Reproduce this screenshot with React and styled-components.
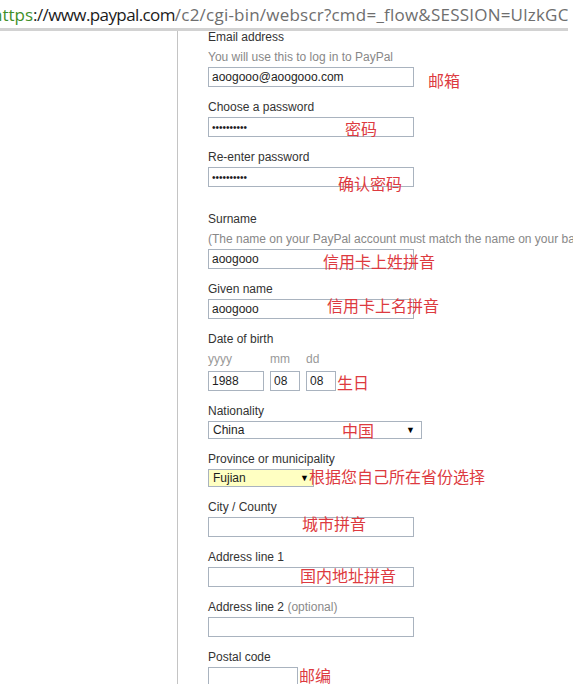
import React from 'react';
import styled, { createGlobalStyle } from 'styled-components';

const Global = createGlobalStyle`
  html, body { margin: 0; padding: 0; background: #fff; }
  body { width: 573px; height: 695px; overflow: hidden; }
`;

const Page = styled.div`
  width: 573px;
  height: 695px;
  overflow: hidden;
  background: #fff;
  font-family: "Liberation Sans", Arial, sans-serif;
`;

const AddressBar = styled.div`
  width: 568px;
  height: 28px;
  border-bottom: 3px solid #d2d2d2;
  overflow: hidden;
  white-space: nowrap;
  font-family: "Open Sans", "Noto Sans", sans-serif;
  font-size: 17px;
  line-height: 30px;
  text-indent: -8px;
`;

const Scheme = styled.span`color: #3f8f2a;`;
const Host = styled.span`color: #1b1b1b; letter-spacing: -0.6px;`;
const Path = styled.span`color: #6e6e6e; letter-spacing: 0.22px;`;

const Body = styled.div`
  display: flex;
  height: 653px;
  overflow: hidden;
`;

const LeftPane = styled.div`
  flex: 0 0 177px;
  border-right: 1px solid #c4c4c4;
`;

const Form = styled.div`
  flex: 1;
  min-width: 0;
  padding-left: 30px;
  display: flex;
  flex-direction: column;
  gap: 13px;
  margin-top: -1px;
`;

const Field = styled.div`
  display: flex;
  flex-direction: column;
  margin-top: ${(p) => p.$extra || 0}px;
`;

const Label = styled.div`
  font-size: 12px;
  line-height: 14px;
  color: #333;
  margin-bottom: 3px;
  white-space: nowrap;
`;

const Muted = styled.span`
  color: #8a8a8a;
`;

const Hint = styled.div`
  font-size: 12px;
  line-height: 14px;
  color: #888;
  margin: 3px 0 3px;
  white-space: nowrap;
`;

const SubLabels = styled.div`
  display: flex;
  gap: 6px;
  margin: 3px 0 5px;
`;

const SubLabel = styled.span`
  width: ${(p) => p.$w}px;
  font-size: 12px;
  line-height: 14px;
  color: #999;
`;

const InputWrap = styled.div`
  position: relative;
  display: flex;
  align-items: center;
  gap: ${(p) => p.$gap || 0}px;
`;

const TextBox = styled.input`
  box-sizing: border-box;
  width: ${(p) => p.$w || 206}px;
  height: 20px;
  margin: 0;
  padding: 0 3px;
  border: 1px solid #a9b3bf;
  border-radius: 0;
  background: #fff;
  color: #1e1e1e;
  font-family: "Liberation Sans", Arial, sans-serif;
  font-size: ${(p) => (p.$dots ? 10 : 12)}px;
  outline: none;
`;

const SelectBox = styled.div`
  box-sizing: border-box;
  width: ${(p) => p.$w}px;
  height: 18px;
  display: flex;
  align-items: center;
  justify-content: space-between;
  padding: 0 ${(p) => p.$pr || 6}px 0 4px;
  border: 1px solid #a9b3bf;
  background: ${(p) => p.$bg || '#fff'};
  font-size: 12px;
  color: #1e1e1e;
`;

const Arrow = styled.span`
  font-size: 9px;
  line-height: 9px;
  color: #000;
`;

const Annot = styled.span`
  position: absolute;
  left: ${(p) => p.$x}px;
  top: ${(p) => p.$y}px;
  font-family: "Noto Sans CJK SC", sans-serif;
  font-size: 16px;
  line-height: 16px;
  color: #dd3a40;
  white-space: nowrap;
  pointer-events: none;
`;

const InlineNote = styled.span`
  font-family: "Noto Sans CJK SC", sans-serif;
  font-size: 16px;
  line-height: 16px;
  color: #dd3a40;
  white-space: nowrap;
  margin-left: ${(p) => p.$ml || 0}px;
  position: relative;
  top: ${(p) => p.$dy || 0}px;
`;

export default function App() {
  return (
    <Page>
      <Global />
      <AddressBar>
        <Scheme>https</Scheme>
        <Host>://www.paypal.com</Host>
        <Path>/c2/cgi-bin/webscr?cmd=_flow&amp;SESSION=UlzkGC</Path>
      </AddressBar>
      <Body>
        <LeftPane />
        <Form>
          <Field>
            <Label>Email address</Label>
            <Hint>You will use this to log in to PayPal</Hint>
            <InputWrap>
              <TextBox readOnly value="aoogooo@aoogooo.com" />
              <Annot $x={220} $y={5}>邮箱</Annot>
            </InputWrap>
          </Field>
          <Field>
            <Label>Choose a password</Label>
            <InputWrap>
              <TextBox readOnly $dots value="••••••••••" />
              <Annot $x={137} $y={3}>密码</Annot>
            </InputWrap>
          </Field>
          <Field>
            <Label>Re-enter password</Label>
            <InputWrap>
              <TextBox readOnly $dots value="••••••••••" />
              <Annot $x={130} $y={8}>确认密码</Annot>
            </InputWrap>
          </Field>
          <Field $extra={12}>
            <Label>Surname</Label>
            <Hint>(The name on your PayPal account must match the name on your bank card)</Hint>
            <InputWrap>
              <TextBox readOnly value="aoogooo" />
              <Annot $x={115} $y={4}>信用卡上姓拼音</Annot>
            </InputWrap>
          </Field>
          <Field>
            <Label>Given name</Label>
            <InputWrap>
              <TextBox readOnly value="aoogooo" />
              <Annot $x={119} $y={-2}>信用卡上名拼音</Annot>
            </InputWrap>
          </Field>
          <Field>
            <Label>Date of birth</Label>
            <SubLabels>
              <SubLabel $w={56}>yyyy</SubLabel>
              <SubLabel $w={30}>mm</SubLabel>
              <SubLabel $w={30}>dd</SubLabel>
            </SubLabels>
            <InputWrap $gap={6}>
              <TextBox readOnly $w={56} value="1988" />
              <TextBox readOnly $w={30} value="08" />
              <TextBox readOnly $w={30} value="08" />
              <InlineNote $ml={-5} $dy={1}>生日</InlineNote>
            </InputWrap>
          </Field>
          <Field>
            <Label>Nationality</Label>
            <InputWrap>
              <SelectBox $w={214}>
                <span>China</span>
                <Arrow>▼</Arrow>
              </SelectBox>
              <Annot $x={134} $y={1}>中国</Annot>
            </InputWrap>
          </Field>
          <Field>
            <Label>Province or municipality</Label>
            <InputWrap>
              <SelectBox $w={106} $bg="#ffffc2" $pr={4}>
                <span>Fujian</span>
                <Arrow>▼</Arrow>
              </SelectBox>
              <Annot $x={101} $y={-1}>根据您自己所在省份选择</Annot>
            </InputWrap>
          </Field>
          <Field>
            <Label>City / County</Label>
            <InputWrap>
              <TextBox readOnly value="" />
              <Annot $x={94} $y={-2}>城市拼音</Annot>
            </InputWrap>
          </Field>
          <Field>
            <Label>Address line 1</Label>
            <InputWrap>
              <TextBox readOnly value="" />
              <Annot $x={92} $y={0}>国内地址拼音</Annot>
            </InputWrap>
          </Field>
          <Field>
            <Label>
              Address line 2 <Muted>(optional)</Muted>
            </Label>
            <InputWrap>
              <TextBox readOnly value="" />
            </InputWrap>
          </Field>
          <Field>
            <Label>Postal code</Label>
            <InputWrap>
              <TextBox readOnly $w={90} value="" />
              <InlineNote $ml={1} $dy={-2}>邮编</InlineNote>
            </InputWrap>
          </Field>
        </Form>
      </Body>
    </Page>
  );
}
